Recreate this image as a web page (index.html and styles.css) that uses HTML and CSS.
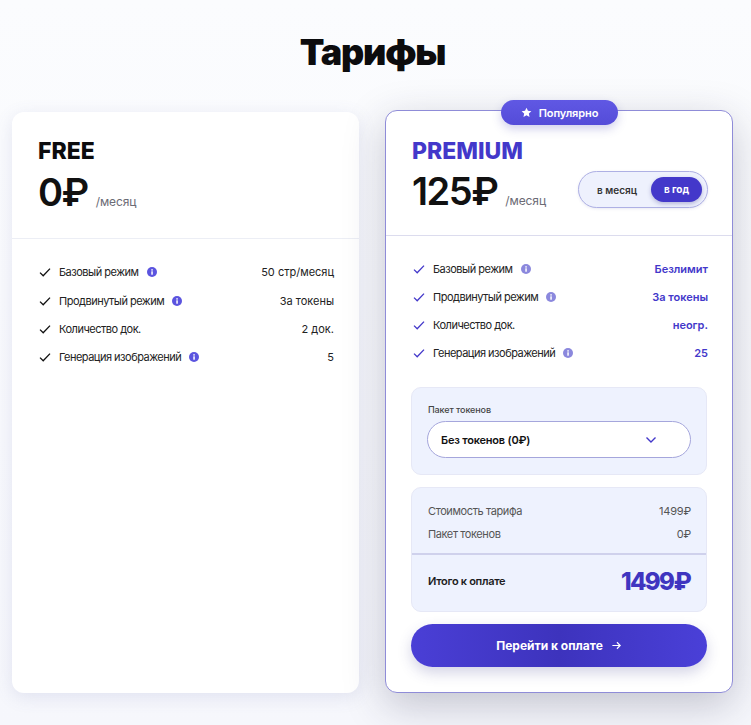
FILE: index.html
```html
<!DOCTYPE html>
<html lang="ru">
<head>
<meta charset="utf-8">
<title>Тарифы</title>
<link rel="stylesheet" href="styles.css">
</head>
<body>
<svg class="defs" width="0" height="0" aria-hidden="true">
  <symbol id="check" viewBox="0 0 12 12"><path d="M1 6.600 4.200 9.800 11 2.600" fill="none" stroke="currentColor" stroke-width="1.300"/></symbol>
  <symbol id="info" viewBox="0 0 10 10"><circle cx="5" cy="5" r="5" fill="currentColor"/><rect x="4.300" y="4.300" width="1.500" height="3.400" fill="#fff"/><rect x="4.300" y="2.200" width="1.500" height="1.400" fill="#fff"/></symbol>
</svg>
<main class="page">
  <h1 class="title">Тарифы</h1>
  <div class="plans">
    <section class="card card-free">
      <header class="card-head head-free">
        <h2 class="plan-name">FREE</h2>
        <div class="price-row">
          <span class="price">0₽</span><span class="per">/месяц</span>
        </div>
      </header>
      <ul class="features">
        <li class="feature"><svg class="check"><use href="#check"/></svg><span class="f-name">Базовый режим</span><svg class="info"><use href="#info"/></svg><span class="f-val">50 стр/месяц</span></li>
        <li class="feature"><svg class="check"><use href="#check"/></svg><span class="f-name">Продвинутый режим</span><svg class="info"><use href="#info"/></svg><span class="f-val">За токены</span></li>
        <li class="feature"><svg class="check"><use href="#check"/></svg><span class="f-name">Количество док.</span><span class="f-val">2 док.</span></li>
        <li class="feature"><svg class="check"><use href="#check"/></svg><span class="f-name">Генерация изображений</span><svg class="info"><use href="#info"/></svg><span class="f-val">5</span></li>
      </ul>
    </section>
    <section class="card card-premium">
      <div class="badge"><svg class="star" viewBox="0 0 24 24"><path d="M12 1.500l3.200 6.900 7.500.9-5.600 5.100 1.500 7.400L12 18.100l-6.600 3.700 1.500-7.400L1.300 9.300l7.500-.9z" fill="currentColor"/></svg><span>Популярно</span></div>
      <header class="card-head head-premium">
        <h2 class="plan-name accent">PREMIUM</h2>
        <div class="price-line">
          <div class="price-row">
            <span class="price">125₽</span><span class="per">/месяц</span>
          </div>
          <div class="toggle">
            <span class="t-opt">в месяц</span>
            <span class="t-opt t-on">в год</span>
          </div>
        </div>
      </header>
      <ul class="features features-premium">
        <li class="feature"><svg class="check c-accent"><use href="#check"/></svg><span class="f-name">Базовый режим</span><svg class="info i-soft"><use href="#info"/></svg><span class="f-val v-accent">Безлимит</span></li>
        <li class="feature"><svg class="check c-accent"><use href="#check"/></svg><span class="f-name">Продвинутый режим</span><svg class="info i-soft"><use href="#info"/></svg><span class="f-val v-accent">За токены</span></li>
        <li class="feature"><svg class="check c-accent"><use href="#check"/></svg><span class="f-name">Количество док.</span><span class="f-val v-accent">неогр.</span></li>
        <li class="feature"><svg class="check c-accent"><use href="#check"/></svg><span class="f-name">Генерация изображений</span><svg class="info i-soft"><use href="#info"/></svg><span class="f-val v-accent">25</span></li>
      </ul>
      <div class="premium-body">
        <div class="panel tokens">
          <div class="tokens-label">Пакет токенов</div>
          <div class="select">
            <span>Без токенов (0₽)</span>
            <svg class="chev" viewBox="0 0 12 8"><path d="M1.500 1.500 6 6l4.500-4.500" fill="none" stroke="currentColor" stroke-width="1.400"/></svg>
          </div>
        </div>
        <div class="panel summary">
          <div class="sum-lines">
            <div class="sum-line"><span>Стоимость тарифа</span><span>1499₽</span></div>
            <div class="sum-line"><span>Пакет токенов</span><span>0₽</span></div>
          </div>
          <div class="sum-total"><span class="total-label">Итого к оплате</span><span class="total-val">1499₽</span></div>
        </div>
        <button class="pay" type="button"><span>Перейти к оплате</span><svg class="arrow" viewBox="0 0 12 12"><path d="M1.500 6h8.500M6.500 2.500 10 6l-3.500 3.500" fill="none" stroke="currentColor" stroke-width="1.300"/></svg></button>
      </div>
    </section>
  </div>
</main>
</body>
</html>
```

FILE: styles.css
```css
* { box-sizing: border-box; }
html, body { margin: 0; height: 100%; }
body {
  font-family: Inter, "Noto Sans", sans-serif;
  color: #111;
  background: linear-gradient(180deg, #fbfcfe 0%, #f6f7fc 100%);
  overflow: hidden;
}
.defs { position: absolute; }
.page { padding: 30px 18px 0 12px; }
.title {
  margin: 0;
  text-align: center;
  font-size: 36px;
  line-height: 44px;
  font-weight: 900;
  letter-spacing: -1.2px;
  color: #0c0c0e;
}
.plans {
  display: grid;
  grid-template-columns: 347px 348px;
  gap: 26px;
  margin-top: 36px;
  align-items: end;
}
.card {
  background: #fff;
  border-radius: 12px;
  position: relative;
}
.card-free {
  height: 581px;
  box-shadow: 0 4px 18px rgba(90, 100, 160, .14);
}
.card-premium {
  height: 583px;
  border: 1px solid #8f8cd8;
  box-shadow: 0 12px 40px rgba(40, 40, 70, .25);
  display: flex;
  flex-direction: column;
}
.card-head { border-bottom: 1px solid #eceef5; }
.head-free { height: 127px; padding: 26px 26px 0; }
.head-premium { height: 125px; padding: 27px 26px 0; border-bottom-color: #dcdcee; }
.plan-name {
  margin: 0;
  font-size: 23px;
  line-height: 26px;
  font-weight: 800;
  color: #0c0c0e;
}
.plan-name.accent { color: #4338ca; }
.price-row { display: flex; align-items: baseline; margin-top: 4px; }
.head-free .price-row { margin-top: 5px; }
.price { font-size: 38px; line-height: 46px; font-weight: 600; letter-spacing: -1.5px; color: #111; }
.per { font-size: 12px; color: #6b6b75; margin-left: 8px; letter-spacing: -0.1px; }
.price-line { display: flex; justify-content: space-between; align-items: center; }
.toggle {
  display: flex;
  align-items: center;
  justify-content: space-between;
  width: 130px;
  height: 37px;
  margin-right: -2px;
  margin-top: 1px;
  padding: 0 5px 0 18px;
  border: 1px solid #aeb0e4;
  border-radius: 19px;
  background: #eef1fd;
  font-size: 10px;
  font-weight: 600;
  color: #333;
  box-shadow: 0 1px 3px rgba(70, 70, 160, .12);
}
.t-on {
  background: #4338ca;
  color: #fff;
  width: 51px;
  height: 25px;
  border-radius: 13px;
  line-height: 25px;
  text-align: center;
  font-weight: 700;
  box-shadow: 0 2px 4px rgba(50, 50, 140, .3);
}
.badge {
  position: absolute;
  top: -11px;
  left: 115px;
  width: 117px;
  height: 25px;
  display: flex;
  align-items: center;
  justify-content: center;
  gap: 7px;
  background: linear-gradient(180deg, #6058e4, #544cd8);
  border-radius: 13px;
  color: #fff;
  font-size: 11px;
  font-weight: 600;
  letter-spacing: -0.1px;
  box-shadow: 0 4px 10px rgba(70, 70, 180, .25);
}
.star { width: 11px; height: 11px; }
.features { list-style: none; margin: 0; padding: 19px 25px 0 27px; }
.features-premium { padding: 19px 24px 0 27px; }
.feature {
  display: flex;
  align-items: center;
  height: 28.4px;
  font-size: 11px;
  color: #222;
}
.features-premium .feature { height: 28px; }
.check { width: 12px; height: 12px; margin-right: 8px; color: #111; flex: none; }
.c-accent { color: #4338ca; }
.f-name { letter-spacing: -0.5px; }
.info { width: 10px; height: 10px; margin-left: 8px; color: #5b54df; flex: none; }
.i-soft { color: #8b88dd; }
.f-val { margin-left: auto; }
.v-accent { color: #4338ca; font-weight: 600; }
.premium-body { padding: 20px 25px 0; display: flex; flex-direction: column; }
.panel {
  background: #eef2fe;
  border: 1px solid #e6e8f6;
  border-radius: 10px;
}
.tokens { height: 88px; padding: 16px 15px 0 16px; }
.tokens-label { font-size: 9px; line-height: 12px; font-weight: 500; color: #444; letter-spacing: -0.1px; }
.select {
  display: flex;
  align-items: center;
  justify-content: space-between;
  height: 37px;
  margin-top: 5px;
  margin-left: -1px;
  padding: 0 33px 0 13px;
  background: #fff;
  border: 1px solid #a5a6dc;
  border-radius: 19px;
  font-size: 11px;
  font-weight: 600;
  letter-spacing: -0.2px;
  color: #111;
}
.chev { width: 12px; height: 8px; color: #4338ca; }
.summary { margin-top: 12px; height: 125px; overflow: hidden; }
.sum-lines { height: 67px; padding: 11px 15px 0 16px; border-bottom: 2px solid #cfd1ec; }
.sum-line {
  display: flex;
  justify-content: space-between;
  height: 23px;
  align-items: center;
  font-size: 11px;
  color: #555;
}
.sum-line span:first-child { letter-spacing: -0.4px; }
.sum-line span:last-child { letter-spacing: -0.2px; }
.sum-total {
  display: flex;
  justify-content: space-between;
  align-items: center;
  height: 55px;
  padding: 0 16px 3px;
}
.total-label { font-size: 11px; font-weight: 600; color: #1c1c22; letter-spacing: -0.3px; }
.total-val { font-size: 24px; font-weight: 800; color: #3f35c0; letter-spacing: -1.6px; }
.pay {
  margin-top: 12px;
  height: 43px;
  border: 0;
  border-radius: 22px;
  background: linear-gradient(90deg, #4a3fd6, #3d33bd 50%, #4a40d8);
  color: #fff;
  font: 700 12px Inter, sans-serif;
  display: flex;
  align-items: center;
  justify-content: center;
  gap: 8px;
  box-shadow: 0 6px 14px rgba(60, 60, 140, .22);
}
.arrow { width: 11px; height: 11px; }
```
